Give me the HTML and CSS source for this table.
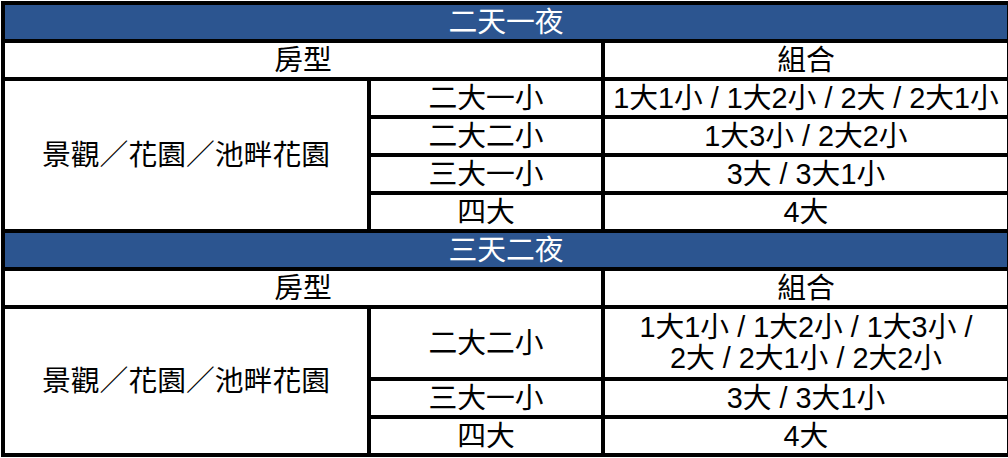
FILE: index.html
```html
<!DOCTYPE html>
<html lang="zh-Hant">
<head>
<meta charset="utf-8">
<title>房型組合</title>
<link rel="stylesheet" href="styles.css">
</head>
<body>
<table class="rooms">
  <colgroup>
    <col class="c1">
    <col class="c2">
    <col class="c3">
  </colgroup>
  <tbody>
    <tr><td class="title" colspan="3">二天一夜</td></tr>
    <tr><td class="head" colspan="2">房型</td><td class="head">組合</td></tr>
    <tr><td rowspan="4">景觀／花園／池畔花園</td><td>二大一小</td><td class="nw">1大1小 / 1大2小 / 2大 / 2大1小</td></tr>
    <tr><td>二大二小</td><td>1大3小 / 2大2小</td></tr>
    <tr><td>三大一小</td><td>3大 / 3大1小</td></tr>
    <tr><td>四大</td><td>4大</td></tr>
    <tr><td class="title" colspan="3">三天二夜</td></tr>
    <tr><td class="head" colspan="2">房型</td><td class="head">組合</td></tr>
    <tr><td rowspan="3">景觀／花園／池畔花園</td><td class="tall">二大二小</td><td class="tall two">1大1小 / 1大2小 / 1大3小 /<br>2大 / 2大1小 / 2大2小</td></tr>
    <tr><td>三大一小</td><td>3大 / 3大1小</td></tr>
    <tr><td>四大</td><td>4大</td></tr>
  </tbody>
</table>
</body>
</html>
```

FILE: styles.css
```css
html, body {
  margin: 0;
  padding: 0;
  background: #ffffff;
}

body {
  padding: 1px 0 0 1px;
  font-family: "Liberation Sans", "Noto Sans CJK TC", sans-serif;
  color: #000000;
}

.rooms {
  border-collapse: collapse;
  table-layout: fixed;
  width: 1006px;
  font-size: 28.8px;
}

.c1 { width: 366px; }
.c2 { width: 234px; }
.c3 { width: 406px; }

.rooms td {
  border: 4px solid #000000;
  height: 34px;
  padding: 0;
  text-align: center;
  vertical-align: middle;
  line-height: 30px;
}

.rooms td.title {
  background: #2c5590;
  color: #ffffff;
}

.rooms td.tall {
  height: 68px;
}

.rooms td.two {
  line-height: 31px;
}

.nw {
  white-space: nowrap;
}
```
